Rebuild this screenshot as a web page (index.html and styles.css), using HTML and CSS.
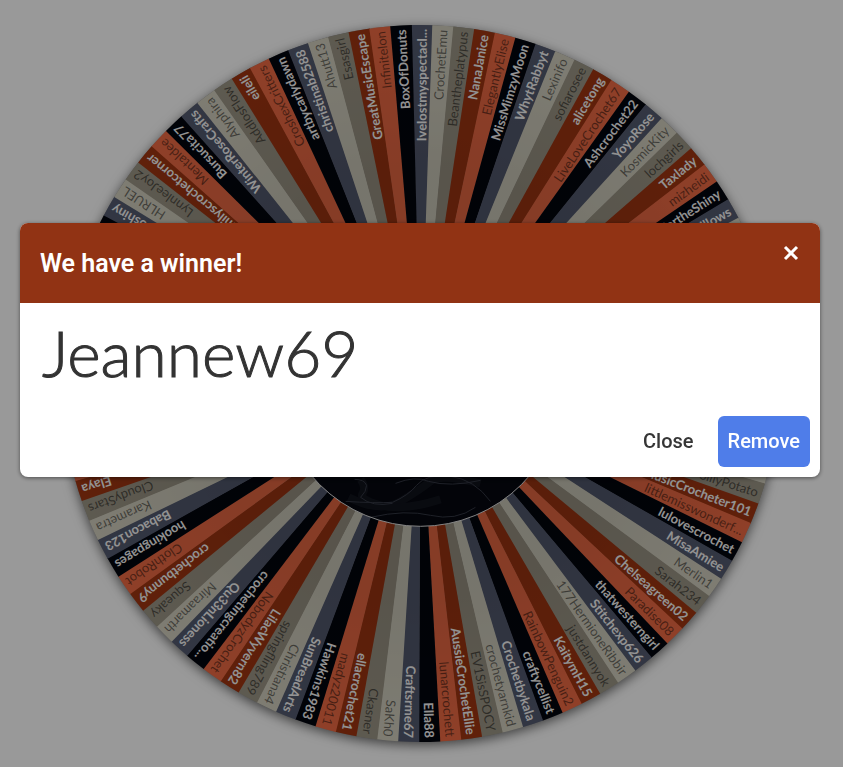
FILE: index.html
```html
<!DOCTYPE html>
<html lang="en">
<head>
    <meta charset="UTF-8">
    <meta name="viewport" content="width=device-width, initial-scale=1.0">
    <title>Wheel of Names</title>
    <link rel="stylesheet" href="styles.css">
</head>
<body>
    <main class="stage">
        <svg class="wheel" viewBox="-384 -384 768 768" aria-label="Wheel of names">
            <defs>
                <radialGradient id="shade" gradientUnits="userSpaceOnUse" cx="0" cy="0" r="359">
                    <stop offset="0.6" stop-color="#000" stop-opacity="0.06"/>
                    <stop offset="1" stop-color="#000" stop-opacity="0"/>
                </radialGradient>
                <clipPath id="hub"><circle r="143"/></clipPath>
            </defs>
            <circle class="rim" r="359"/>
            <g id="slices"></g>
            <circle r="359" fill="url(#shade)"/>
            <g id="names"></g>
            <!-- marble picture in the middle -->
            <circle class="hub" r="143"/>
            <g class="veins" clip-path="url(#hub)">
                <path class="wide" d="M-72 114 Q-40 130 -20 118 T10 98 T60 100"/>
                <path class="wide" d="M-60 96 Q-54 104 -58 110 T-40 122 T20 116"/>
                <path d="M-75 118 Q-45 120 -28 119 Q-12 112 -4 102 Q6 90 30 93 T70 118"/>
                <path d="M-66 96 Q-56 96 -54 102 Q-54 108 -60 114 Q-48 124 -28 120"/>
                <path d="M-50 134 Q-15 126 10 132 T55 124"/>
                <path d="M-25 100 Q-5 92 8 98 Q30 104 60 97"/>
            </g>
            <circle class="hub-line" r="143"/>
        </svg>
    </main>

    <div class="overlay">
        <div class="dialog" role="dialog" aria-labelledby="dialogTitle">
            <header class="dialog-head">
                <h1 id="dialogTitle">We have a winner!</h1>
                <button class="cross" aria-label="close">
                    <svg viewBox="0 0 20 20"><path d="M5 4 L17 16 M17 4 L5 16"/></svg>
                </button>
            </header>
            <section class="winner">Jeannew69</section>
            <footer class="dialog-foot">
                <button class="btn">Close</button>
                <button class="btn btn-remove">Remove</button>
            </footer>
        </div>
    </div>
    <script src="script.js"></script>
</body>
</html>
```
FILE: styles.css
```css
*{
    box-sizing: border-box;
}
body{
    margin: 0;
    background-color: white;
    font-family: Roboto, "Liberation Sans", sans-serif;
    color: #363636;
}
.stage{
    display: flex;
    justify-content: center;
    height: 100vh;
    padding-right: 3px;
    overflow: hidden;
}
.wheel{
    height: 100%;
    max-width: 100%;
}
.rim{
    fill: #888;
    filter: drop-shadow(0 3px 6px rgba(0, 0, 0, 0.6));
}
.name{
    font-family: Lato, "Open Sans", sans-serif;
    font-size: 13px;
    text-anchor: end;
    fill: rgba(0, 0, 0, 0.5);
}
.name.light{
    fill: #f4f4f4;
    font-weight: bold;
}
.hub{
    fill: #05070f;
}
.hub-line{
    fill: none;
    stroke: #ddd;
    stroke-width: 1;
}
.veins{
    fill: none;
    stroke: #343844;
    stroke-width: 1;
}
.veins .wide{
    stroke: #10131c;
    stroke-width: 8;
}
.overlay{
    position: fixed;
    inset: 0;
    display: flex;
    align-items: center;
    justify-content: center;
    padding: 0 23px 67px 20px;
    background-color: rgba(0, 0, 0, 0.4);
}
.dialog{
    width: 100%;
    max-width: 800px;
    border-radius: 8px;
    overflow: hidden;
    background-color: white;
    box-shadow: 0 1px 4px rgba(0, 0, 0, 0.5);
}
.dialog-head{
    display: flex;
    justify-content: space-between;
    height: 80px;
    padding: 20px;
    background-color: #913314;
    color: white;
}
.dialog-head h1{
    margin: 0;
    font-size: 25px;
    font-weight: 600;
    line-height: 42px;
}
button{
    border: 0;
    background: none;
    font-family: inherit;
    color: inherit;
    cursor: pointer;
}
.cross{
    width: 20px;
    height: 20px;
    padding: 0;
}
.cross svg{
    display: block;
    fill: none;
    stroke: white;
    stroke-width: 3;
}
.winner{
    padding: 10px 22px 23px;
    font-family: Lato, "Open Sans", sans-serif;
    font-size: 64px;
    font-weight: 300;
    line-height: 80px;
    color: #333;
    -webkit-text-stroke: 1px #333;
}
.dialog-foot{
    display: flex;
    justify-content: flex-end;
    gap: 14px;
    padding: 0 10px 10px;
}
.btn{
    padding: 10px;
    border-radius: 6px;
    font-size: 20px;
    font-weight: 500;
    line-height: 31px;
}
.btn-remove{
    background-color: #4f7de9;
    color: white;
}
```
FILE: script.js
```js
const SVG = "http://www.w3.org/2000/svg";
const radius = 359;
const total = 107;
const step = 360 / total;
const start = 0.2;

// slate, light, taupe, rust, orange, black
const colors = ["#545b70", "#d2cfbf", "#9c9686", "#a03612", "#ee6a44", "#03050e"];

// names clockwise from the top, by their slice number
const right = ["Ivelostmyspectacl...", "CrochetEmu", "Beantheplatypus", "NanaJanice", "ElegantlyElise",
    "MissMimzyMoon", "WhytRabbyt", "Lexinifo", "sofiarosee", "alicetong", "LiveLoveCrochet67",
    "Ashcrochet22", "YoyoRose", "KosmicKity", "lochgirls", "Taxlady", "mizheidi", "FortheShiny", "Willows"];
const bottom = ["SillyPotato", "MusicCrocheter101", "littlemisswonderf...", "lulovescrochet", "MisaAmiee",
    "Merlin1", "Sarah234", "Chelseagreen02", "Paradise08", "thatwesterngirl", "Stitchexp626",
    "177HermioneRibbir", "justdannyok", "KaitymH15", "RainbowPenguin2", "craftycellist", "Crochetbykala",
    "crochetyarnkid", "EV1SisSPOCY", "AussieCrochetEllie", "lunarcrochett", "Ella88", "Craftsrme67",
    "SaKh0", "Ckasner", "ellacrochet21", "madyz20011", "Hawkins1983", "SunBreadArts", "Christiana4",
    "springfling789", "LilacWyvern82", "NobodyzCrochet", "crochetingcreatio...", "Qu33nLioness",
    "Miraamarth", "Squeaky", "crochetbunny9", "ClothRobot", "hookingpages", "Babacon123", "Karametra",
    "CloudyStars", "Elaya"];
const left = ["Ooshiny", "HLRUEL", "LynnleeJoy2", "Emilyscrochetcorner", "Mentaldee", "Bursucita77",
    "WinterRoseCrafts", "Alyphira", "AddlosFlow", "eileli", "CroshexCritters", "artbycarlydawn",
    "christinab2588", "Ahutt13", "Esasgirl", "GreatMusicEscape", "Infinitelon", "BoxOfDonuts"];

const names = {};
right.forEach((v, i) => names[i] = v);
bottom.forEach((v, i) => names[i + 32] = v);
left.forEach((v, i) => names[i + 89] = v);

function point(deg) {
    const a = deg * Math.PI / 180;
    return (radius * Math.sin(a)).toFixed(2) + " " + (-radius * Math.cos(a)).toFixed(2);
}

for (let i = 0; i < total; i++) {
    const mid = start + i * step;
    // the last slices count back from the top
    const c = i < 82 ? i % 6 : (i + 1) % 6;

    const slice = document.createElementNS(SVG, "path");
    slice.setAttribute("d", `M0 0 L${point(mid - step / 2)} A${radius} ${radius} 0 0 1 ${point(mid + step / 2 + 0.1)} Z`);
    slice.setAttribute("fill", colors[c]);
    document.querySelector("#slices").append(slice);

    if (names[i]) {
        const text = document.createElementNS(SVG, "text");
        text.setAttribute("class", c === 0 || c === 3 || c === 5 ? "name light" : "name");
        text.setAttribute("transform", `rotate(${mid - 90})`);
        text.setAttribute("x", radius - 4);
        text.setAttribute("y", 5);
        text.textContent = names[i];
        document.querySelector("#names").append(text);
    }
}
```
